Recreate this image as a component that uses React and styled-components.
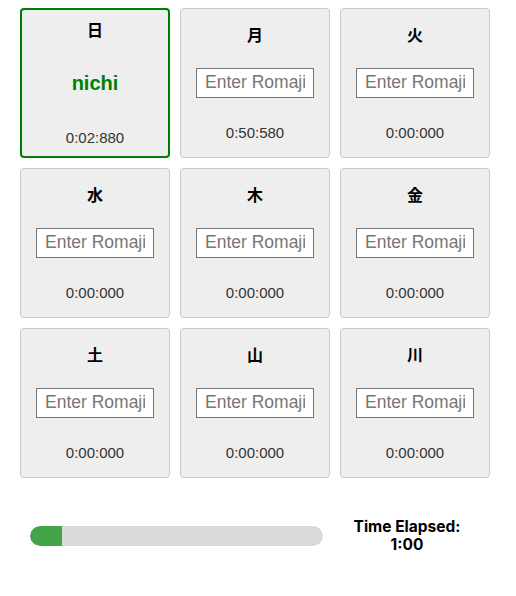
import React from "react";
import styled, { createGlobalStyle } from "styled-components";

const GlobalStyle = createGlobalStyle`
  body {
    margin: 0;
    font-family: "Liberation Sans", Arial, sans-serif;
    background: #fff;
  }
`;

const CARDS = [
  { kanji: "日", answer: "nichi", time: "0:02:880", solved: true },
  { kanji: "月", time: "0:50:580" },
  { kanji: "火", time: "0:00:000" },
  { kanji: "水", time: "0:00:000" },
  { kanji: "木", time: "0:00:000" },
  { kanji: "金", time: "0:00:000" },
  { kanji: "土", time: "0:00:000" },
  { kanji: "山", time: "0:00:000" },
  { kanji: "川", time: "0:00:000" },
];

const App = () => {
  const progress = 11;

  return (
    <>
      <GlobalStyle />
      <Page>
        <Grid>
          {CARDS.map((card) => (
            <Card key={card.kanji} solved={card.solved}>
              <Kanji>{card.kanji}</Kanji>
              {card.solved ? (
                <Answer>{card.answer}</Answer>
              ) : (
                <RomajiInput placeholder="Enter Romaji" />
              )}
              <Timer>{card.time}</Timer>
            </Card>
          ))}
        </Grid>
        <Footer>
          <Track>
            <Fill style={{ width: `${progress}%` }} />
          </Track>
          <Elapsed>
            <ElapsedLine>Time Elapsed:</ElapsedLine>
            <ElapsedLine>1:00</ElapsedLine>
          </Elapsed>
        </Footer>
      </Page>
    </>
  );
};

const Page = styled.div`
  padding: 8px 20px;
`;

const Grid = styled.div`
  display: grid;
  grid-template-columns: repeat(3, 150px);
  grid-auto-rows: 150px;
  gap: 10px;
`;

const Card = styled.div`
  box-sizing: border-box;
  display: flex;
  flex-direction: column;
  align-items: center;
  justify-content: center;
  background: #eeeeee;
  border: ${({ solved }) => (solved ? "2px solid #007d00" : "1px solid #c8c8c8")};
  border-radius: 4px;
`;

const Kanji = styled.div`
  font-family: "Noto Sans CJK JP", sans-serif;
  font-size: 16px;
  font-weight: 700;
  line-height: 16px;
  color: #000;
  margin-bottom: 26px;
`;

const Answer = styled.div`
  font-size: 20px;
  font-weight: 700;
  line-height: 24px;
  color: #008000;
  margin: 8px 0;
`;

const RomajiInput = styled.input`
  box-sizing: border-box;
  width: 118px;
  height: 30px;
  padding: 0 8px;
  border: 1px solid #767676;
  border-radius: 0;
  background: #fff;
  font-family: "Liberation Sans", Arial, sans-serif;
  font-size: 17.5px;
  color: #333;
  outline: none;

  &::placeholder {
    color: #757575;
  }
`;

const Timer = styled.div`
  font-size: 15px;
  line-height: 17px;
  color: #333;
  margin-top: 26px;
`;

const Footer = styled.div`
  display: flex;
  align-items: center;
  width: 470px;
  box-sizing: border-box;
  padding: 0 10px;
  margin-top: 40px;
`;

const Track = styled.div`
  flex: 1;
  height: 20px;
  border-radius: 10px;
  background: #dadada;
  overflow: hidden;
  margin-right: 11px;
`;

const Fill = styled.div`
  height: 100%;
  background: #43a447;
  border-radius: 10px 0 0 10px;
`;

const Elapsed = styled.div`
  width: 146px;
  display: flex;
  flex-direction: column;
  align-items: center;
  font-family: Inter, "Noto Sans", sans-serif;
  font-size: 15.5px;
  font-weight: 700;
  color: #000;
`;

const ElapsedLine = styled.div`
  line-height: 18px;
`;

export default App;
